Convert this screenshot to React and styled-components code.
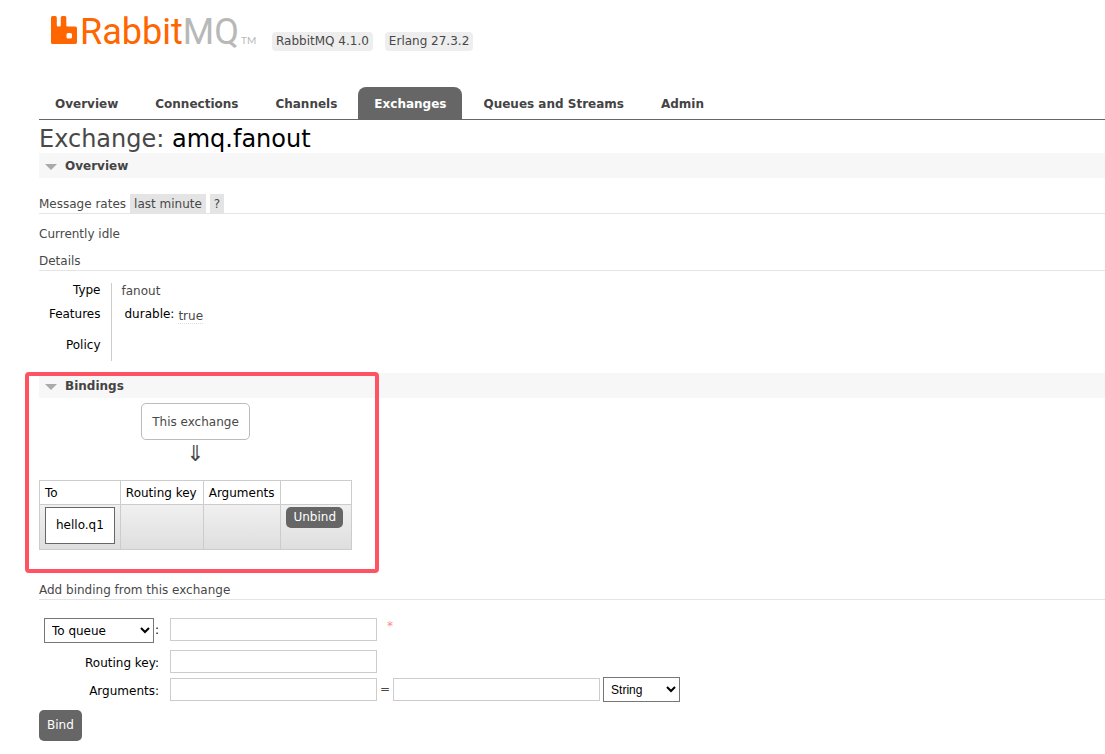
import React from 'react';
import styled, { createGlobalStyle } from 'styled-components';

const GlobalStyle = createGlobalStyle`
  * {
    box-sizing: border-box;
  }
  body {
    margin: 0;
    background: #fff;
    color: #484848;
    font: 12px/17px Verdana, 'DejaVu Sans', sans-serif;
  }
  input, select, button {
    margin: 0;
    font-family: inherit;
    font-size: 12px;
  }
`;

const Page = styled.div`
  padding: 3px 0 12px 39px;
`;

const Header = styled.header`
  display: flex;
  align-items: flex-end;
  gap: 12px;
  height: 48px;
  padding-left: 11px;
`;

const Logo = styled.a`
  display: block;
  height: 48px;
`;

const Version = styled.span`
  padding: 1px 4px;
  border-radius: 4px;
  background: #eee;
`;

const Tabs = styled.nav`
  display: flex;
  gap: 5px;
  margin-top: 36px;
  border-bottom: 1px solid #666;
`;

const Tab = styled.a`
  padding: 9px 16px 6px;
  border-radius: 8px 8px 0 0;
  background: ${(props) => (props.$active ? '#666' : 'transparent')};
  color: ${(props) => (props.$active ? '#fff' : '#444')};
  font-weight: bold;
  text-decoration: none;
`;

const Title = styled.h1`
  margin: 6px 0 0;
  font-size: 24px;
  font-weight: normal;
  line-height: 27px;

  b {
    color: #000;
    font-weight: normal;
  }
`;

const SectionTitle = styled.h2`
  display: flex;
  align-items: center;
  gap: 8px;
  margin: 0;
  padding: 5px 6px 3px;
  background: #f7f7f7;
  color: #444;
  font-size: 12px;
  line-height: 17px;

  &::before {
    content: '';
    border: 6px solid transparent;
    border-top-color: #aaa;
    border-bottom: 0;
  }
`;

const SubTitle = styled.h3`
  display: flex;
  gap: 4px;
  height: 20px;
  margin: ${(props) => props.$top}px 0 0;
  border-bottom: 1px solid #e4e4e4;
  font-size: 12px;
  font-weight: normal;
  line-height: 21px;
`;

const Chip = styled.span`
  height: 19px;
  padding: 0 4px;
  background: #e4e4e4;
`;

const Idle = styled.p`
  margin: 12px 0 0;
`;

const Facts = styled.table`
  margin-top: 12px;
  border-collapse: collapse;

  th {
    width: 72px;
    padding: 0 10px 0 0;
    border-right: 1px solid #ccc;
    color: #000;
    font-weight: normal;
    line-height: 14px;
    text-align: right;
    vertical-align: top;
  }
  td {
    padding: 0 10px;
    vertical-align: top;
  }
`;

const FactRow = styled.tr`
  height: ${(props) => props.$height}px;
`;

const Feature = styled.span`
  display: flex;
  gap: 4px;
  padding-left: 3px;
  color: #000;
  line-height: 14px;

  abbr {
    margin-top: 2px;
    border-bottom: 1px dotted #ddd;
    color: #484848;
    text-decoration: none;
  }
`;

const Bindings = styled.section`
  position: relative;
  margin-top: 12px;
`;

const Marker = styled.div`
  position: absolute;
  top: -1px;
  left: -14px;
  width: 354px;
  height: 201px;
  border: 4px solid #ff5364;
  border-radius: 4px;
  pointer-events: none;
`;

const Diagram = styled.div`
  display: flex;
  flex-direction: column;
  align-items: center;
  width: 313px;
  padding-top: 5px;
`;

const ExchangeBox = styled.span`
  padding: 10px 10px 8px;
  border: 1px solid #bbb;
  border-radius: 5px;
`;

const Arrow = styled.span`
  margin-bottom: 12px;
  font-size: 22px;
  line-height: 28px;
`;

const BindingTable = styled.table`
  border-collapse: collapse;

  th, td {
    padding: 2px 5px;
    border: 1px solid #ccc;
    color: #000;
    vertical-align: top;
  }
  th {
    padding: 4px 6px 2px 5px;
    font-weight: normal;
    text-align: left;
  }
  th:last-child {
    width: 71px;
  }
  tbody tr {
    height: 45px;
    background: linear-gradient(#f0f0f0, #dedede);
  }
`;

const QueueLink = styled.a`
  display: block;
  padding: 9px 10px;
  border: 1px solid #666;
  background: #fff;
  color: #000;
  text-decoration: none;
`;

const Button = styled.button`
  display: block;
  padding: ${(props) => (props.$small ? '2px 7px' : '7px 8px')};
  border: 0;
  border-radius: 5px;
  background: #666;
  color: #fff;
  line-height: 17px;
`;

const Form = styled.form`
  display: grid;
  grid-template-columns: 120px 1fr;
  grid-template-rows: 32px 27px 33px auto;
  align-items: start;
  column-gap: 11px;
  margin-top: 18px;
`;

const LabelCell = styled.div`
  display: flex;
  align-items: center;
  justify-content: flex-end;
  gap: 1px;
  height: ${(props) => props.$height}px;
  color: #000;
`;

const Field = styled.div`
  display: flex;
  align-items: center;
  gap: 3px;
`;

const TextInput = styled.input`
  width: 207px;
  height: 23px;
  border: 1px solid #ccc;
`;

const Select = styled.select`
  width: ${(props) => props.$width}px;
  height: 25px;
  padding: 0 3px;
  background: #fff;
  color: #000;
  font-family: ${(props) => props.$font || 'inherit'};
`;

const Required = styled.span`
  align-self: flex-start;
  padding-left: 7px;
  color: #f88;
`;

const tabs = ['Overview', 'Connections', 'Channels', 'Exchanges', 'Queues and Streams', 'Admin'];

const RabbitLogo = () => (
  <svg width="210" height="48" viewBox="0 -12 210 48" role="img" aria-label="RabbitMQ">
    <path
      fill="#f60"
      fillRule="evenodd"
      d="M2.500 1h2.800q1.500 0 1.500 1.500v7.700q0 1.200 1.200 1.200h1.600q1.200 0 1.200-1.200V2.500q0-1.500 1.500-1.500h2.500q1.500 0 1.500 1.500v7.700q0 1.200 1.200 1.200h7.800q1.700 0 1.700 1.700v14.200q0 1.700-1.700 1.700H2.500q-1.500 0-1.500-1.500V2.500Q1 1 2.500 1zM18 18q-1.500 0-1.500 1.500v2.500q0 1.500 1.500 1.500h2.500q1.500 0 1.500-1.500v-2.500q0-1.500-1.500-1.500z"
    />
    <text x="30" y="29" fontFamily="Roboto, sans-serif" fontSize="36">
      <tspan fill="#f60">Rabbit</tspan>
      <tspan fill="#b8b8b8">MQ</tspan>
    </text>
    <text x="191" y="29" fill="#b8b8b8" fontFamily="Lato, sans-serif" fontSize="10">
      TM
    </text>
  </svg>
);

const App = () => (
  <Page>
    <GlobalStyle />
    <Header>
      <Logo href="#/">
        <RabbitLogo />
      </Logo>
      <Version>RabbitMQ 4.1.0</Version>
      <Version>Erlang 27.3.2</Version>
    </Header>
    <Tabs>
      {tabs.map((tab) => (
        <Tab key={tab} href="#/" $active={tab === 'Exchanges'}>
          {tab}
        </Tab>
      ))}
    </Tabs>

    <main>
      <Title>
        Exchange: <b>amq.fanout</b>
      </Title>
      <section>
        <SectionTitle>Overview</SectionTitle>
        <SubTitle $top={16}>
          Message rates <Chip>last minute</Chip>
          <Chip>?</Chip>
        </SubTitle>
        <Idle>Currently idle</Idle>
        <SubTitle $top={8}>Details</SubTitle>
        <Facts>
          <tbody>
            <FactRow $height={24}>
              <th scope="row">Type</th>
              <td>fanout</td>
            </FactRow>
            <FactRow $height={31}>
              <th scope="row">Features</th>
              <td>
                <Feature>
                  durable: <abbr>true</abbr>
                </Feature>
              </td>
            </FactRow>
            <FactRow $height={23}>
              <th scope="row">Policy</th>
              <td />
            </FactRow>
          </tbody>
        </Facts>
      </section>

      <Bindings>
        <SectionTitle>Bindings</SectionTitle>
        <Diagram>
          <ExchangeBox>This exchange</ExchangeBox>
          <Arrow>⇓</Arrow>
        </Diagram>
        <BindingTable>
          <thead>
            <tr>
              <th>To</th>
              <th>Routing key</th>
              <th>Arguments</th>
              <th />
            </tr>
          </thead>
          <tbody>
            <tr>
              <td>
                <QueueLink href="#/">hello.q1</QueueLink>
              </td>
              <td />
              <td />
              <td>
                <Button type="button" $small>
                  Unbind
                </Button>
              </td>
            </tr>
          </tbody>
        </BindingTable>
        <Marker />
      </Bindings>

      <SubTitle $top={30}>Add binding from this exchange</SubTitle>
      <Form>
        <LabelCell $height={25}>
          <Select $width={110} aria-label="Destination type">
            <option>To queue</option>
            <option>To exchange</option>
          </Select>
          :
        </LabelCell>
        <Field>
          <TextInput aria-label="Destination" />
          <Required>*</Required>
        </Field>
        <LabelCell $height={26}>
          <label htmlFor="routing-key">Routing key:</label>
        </LabelCell>
        <Field>
          <TextInput id="routing-key" />
        </Field>
        <LabelCell $height={28}>
          <label htmlFor="arguments">Arguments:</label>
        </LabelCell>
        <Field>
          <TextInput id="arguments" />
          =
          <TextInput aria-label="Argument value" />
          <Select $width={77} $font="'Liberation Sans', Arial, sans-serif" aria-label="Argument type">
            <option>String</option>
            <option>Number</option>
            <option>Boolean</option>
          </Select>
        </Field>
        <Field>
          <Button type="button">Bind</Button>
        </Field>
      </Form>
    </main>
  </Page>
);

export default App;
